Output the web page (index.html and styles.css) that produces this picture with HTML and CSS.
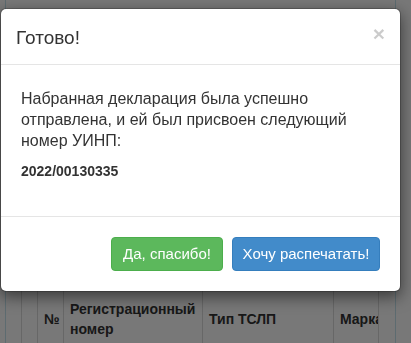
FILE: index.html
```html
<!DOCTYPE html>
<html lang="ru">
<head>
<meta charset="utf-8">
<title>Готово</title>
<link rel="stylesheet" href="styles.css">
</head>
<body>
<div class="page">
  <div class="panel">
    <div class="hidden-area"></div>
    <div class="table-wrap">
      <table class="grid">
        <colgroup>
          <col class="c-check">
          <col class="c-num">
          <col class="c-reg">
          <col class="c-type">
          <col class="c-mark">
        </colgroup>
        <thead>
          <tr>
            <th></th>
            <th>№</th>
            <th>Регистрационный номер</th>
            <th>Тип ТСЛП</th>
            <th>Марка</th>
          </tr>
        </thead>
      </table>
    </div>
  </div>
</div>

<div class="backdrop"></div>

<div class="modal">
  <div class="modal-header">
    <button class="close" type="button">×</button>
    <h4 class="modal-title">Готово!</h4>
  </div>
  <div class="modal-body">
    <p class="msg">Набранная декларация была успешно отправлена, и ей был присвоен следующий номер УИНП:</p>
    <p class="code">2022/00130335</p>
  </div>
  <div class="modal-footer">
    <button class="btn btn-success" type="button">Да, спасибо!</button>
    <button class="btn btn-primary" type="button">Хочу распечатать!</button>
  </div>
</div>
</body>
</html>
```

FILE: styles.css
```css
* { box-sizing: border-box; }

html, body {
  margin: 0;
  padding: 0;
  height: 100%;
  overflow: hidden;
}

body {
  background: #fff;
  font-family: "Liberation Sans", Arial, sans-serif;
  color: #333;
  font-size: 14px;
  line-height: 1.42857;
}

.page {
  padding-left: 5px;
  width: 396px;
}

.panel {
  border-left: 1px solid #c6e4ee;
  border-right: 1px solid #c6e4ee;
  padding: 0 16px 0 15px;
  height: 343px;
}

.hidden-area {
  height: 288px;
}

.table-wrap {
  width: 358px;
  overflow: hidden;
  border-right: 1px solid #dcdcdc;
}

.grid {
  border-collapse: collapse;
  table-layout: fixed;
  width: 460px;
}

.c-check { width: 16px; }
.c-num { width: 26px; }
.c-reg { width: 139px; }
.c-type { width: 131px; }
.c-mark { width: 148px; }

.grid th {
  border: 1px solid #dcdcdc;
  padding: 8px 6px;
  text-align: left;
  vertical-align: middle;
  font-weight: bold;
  font-size: 14px;
  line-height: 20px;
  color: #333;
  height: 60px;
}

.backdrop {
  position: fixed;
  inset: 0;
  background: rgba(0, 0, 0, 0.53);
}

.modal {
  position: absolute;
  left: 0;
  top: 8px;
  width: 401px;
  background: #fff;
  border: 1px solid rgba(0, 0, 0, 0.2);
  border-radius: 6px;
  box-shadow: 0 5px 15px rgba(0, 0, 0, 0.5);
  background-clip: padding-box;
}

.modal-header {
  padding: 16px 15px 14px;
  border-bottom: 1px solid #e5e5e5;
}

.modal-title {
  margin: 0;
  font-size: 19px;
  font-weight: normal;
  line-height: 25px;
  color: #333;
}

.close {
  float: right;
  margin-top: -2px;
  padding: 0;
  border: 0;
  background: transparent;
  font-family: "Liberation Sans", Arial, sans-serif;
  font-size: 21px;
  font-weight: bold;
  line-height: 1;
  color: #000;
  opacity: 0.2;
  cursor: pointer;
}

.modal-body {
  padding: 23px 20px 25px;
}

.msg {
  margin: 0 0 10px;
  font-size: 16px;
  line-height: 21px;
  color: #333;
}

.code {
  margin: 0 0 10px;
  font-weight: bold;
  font-size: 14px;
  line-height: 20px;
  color: #333;
}

.modal-footer {
  display: flex;
  justify-content: flex-end;
  gap: 9px;
  padding: 20px 20px 20px;
  border-top: 1px solid #e5e5e5;
}

.btn {
  display: inline-block;
  padding: 6px 0;
  font-family: "Liberation Sans", Arial, sans-serif;
  font-size: 15px;
  line-height: 20px;
  text-align: center;
  color: #fff;
  border: 1px solid transparent;
  border-radius: 4px;
  cursor: pointer;
}

.btn-success {
  width: 112px;
  background: #5cb85c;
  border-color: #4cae4c;
}

.btn-primary {
  width: 148px;
  background: #428bca;
  border-color: #357ebd;
}
```
